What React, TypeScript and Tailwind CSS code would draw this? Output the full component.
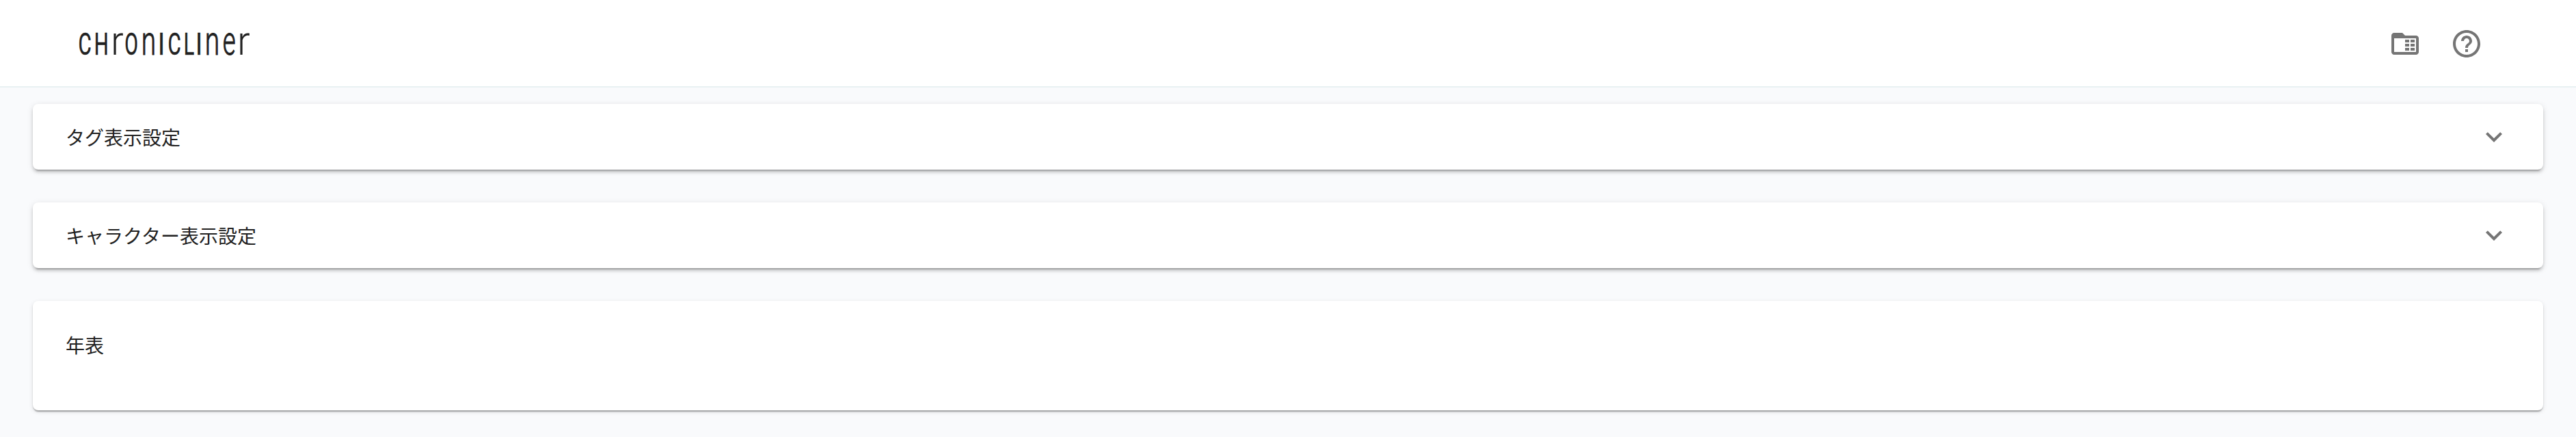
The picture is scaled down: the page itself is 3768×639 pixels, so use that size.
const CAP = "flex justify-center text-[44px] font-normal [-webkit-text-stroke:0.5px_#212121]";
const TALL = "flex justify-center text-[58.5px] font-light [-webkit-text-stroke:1px_#212121]";
const TALL_THIN = "flex justify-center text-[59.5px] font-light";

const MARK = [
  { ch: "C", style: CAP, gap: 0, width: 16.3, scale: 0.67, shift: 0 },
  { ch: "H", style: CAP, gap: 7.7, width: 16.7, scale: 0.67, shift: 0 },
  { ch: "r", style: TALL_THIN, gap: 9.3, width: 14, scale: 0.92, shift: -1.5 },
  { ch: "O", style: CAP, gap: 4.3, width: 16.4, scale: 0.65, shift: 0 },
  { ch: "n", style: TALL, gap: 8.6, width: 16.7, scale: 0.665, shift: 0 },
  { ch: "I", style: CAP, gap: 8.3, width: 4, scale: 0.8, shift: 0 },
  { ch: "C", style: CAP, gap: 8.7, width: 16.3, scale: 0.67, shift: 0 },
  { ch: "L", style: CAP, gap: 8, width: 12.7, scale: 0.65, shift: -0.9 },
  { ch: "I", style: CAP, gap: 5.3, width: 4, scale: 0.8, shift: 0 },
  { ch: "n", style: TALL, gap: 8.7, width: 16.7, scale: 0.665, shift: 0 },
  { ch: "e", style: TALL, gap: 8, width: 16.6, scale: 0.625, shift: 0 },
  { ch: "r", style: TALL_THIN, gap: 8, width: 14, scale: 0.92, shift: -1.5 },
];

function Logo() {
  return (
    <h1 className="flex items-baseline pb-px font-[Roboto,sans-serif] leading-[64px] whitespace-nowrap text-[#212121]">
      {MARK.map(({ ch, style, gap, width, scale, shift }, i) => (
        <span
          key={i}
          className={style}
          style={{ marginLeft: gap, width, transform: `translateX(${shift}px) scaleX(${scale})` }}
        >
          {ch}
        </span>
      ))}
    </h1>
  );
}

function FolderTableIcon() {
  return (
    <svg className="size-12" viewBox="0 0 24 24" fill="#757575">
      <path d="M20 6h-8l-2-2H4c-1.1 0-2 .9-2 2v12c0 1.1.9 2 2 2h16c1.1 0 2-.9 2-2V8c0-1.1-.9-2-2-2zm0 12H4V8h16v10z" />
      <path d="M12 9h3v2h-3zM16 9h3v2h-3zM12 12h3v2h-3zM16 12h3v2h-3zM12 15h3v2h-3zM16 15h3v2h-3z" />
    </svg>
  );
}

function HelpIcon() {
  return (
    <svg className="size-12" viewBox="0 0 24 24" fill="#757575">
      <path d="M11 18h2v-2h-2v2zm1-16C6.48 2 2 6.48 2 12s4.48 10 10 10 10-4.48 10-10S17.52 2 12 2zm0 18c-4.41 0-8-3.59-8-8s3.59-8 8-8 8 3.59 8 8-3.59 8-8 8zm0-14c-2.21 0-4 1.79-4 4h2c0-1.1.9-2 2-2s2 .9 2 2c0 2-3 1.75-3 5h2c0-2.25 3-2.5 3-5 0-2.21-1.79-4-4-4z" />
    </svg>
  );
}

function Accordion({ title }: { title: string }) {
  return (
    <button className="flex h-24 w-full items-center justify-between rounded-lg bg-white px-12 text-left shadow-[0_6px_2px_-4px_rgba(0,0,0,0.2),0_4px_4px_0_rgba(0,0,0,0.14),0_2px_10px_0_rgba(0,0,0,0.12)]">
      <span>{title}</span>
      <svg className="size-12" viewBox="0 0 24 24" fill="#757575">
        <path d="M16.59 8.59 12 13.17 7.41 8.59 6 10l6 6 6-6z" />
      </svg>
    </button>
  );
}

export default function App() {
  return (
    <div className="min-h-[639px] bg-[#f9fafc] font-['Noto_Sans_CJK_JP',sans-serif] text-[28px] leading-[42px] text-[#212121]">
      <header className="flex h-32 items-center justify-between border-b-2 border-[#e8f1f2] bg-white pr-[136px] pl-[116px]">
        <Logo />
        <nav className="flex items-center gap-[42px] pt-0.5">
          <button aria-label="Projects"><FolderTableIcon /></button>
          <button aria-label="Help"><HelpIcon /></button>
        </nav>
      </header>
      <main className="flex flex-col gap-12 px-12 pt-6">
        <Accordion title="タグ表示設定" />
        <Accordion title="キャラクター表示設定" />
        <section className="h-40 rounded-lg bg-white px-12 pt-[43px] shadow-[0_4px_2px_-2px_rgba(0,0,0,0.2),0_2px_2px_0_rgba(0,0,0,0.14),0_2px_6px_0_rgba(0,0,0,0.12)]">
          <h2>年表</h2>
        </section>
      </main>
    </div>
  );
}
